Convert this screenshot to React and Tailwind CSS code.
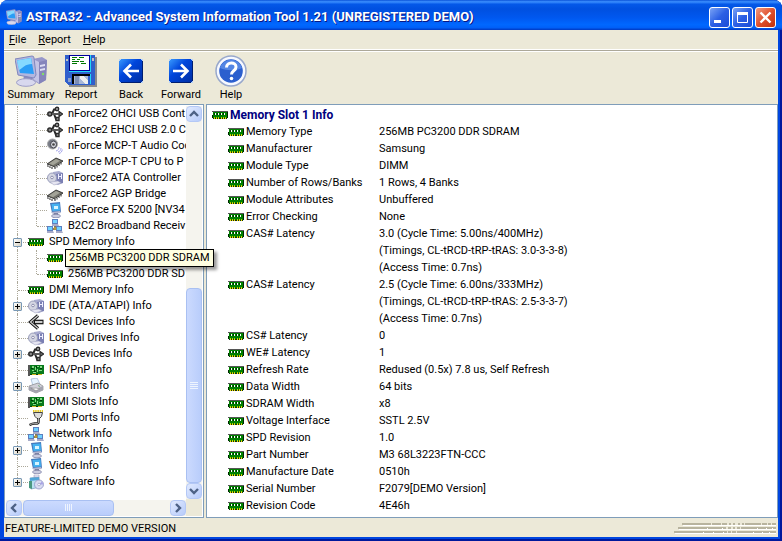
import { useState } from 'react'

const treeItems = [
  { label: 'nForce2 OHCI USB Cont', icon: 'usb', child: true },
  { label: 'nForce2 EHCI USB 2.0 C', icon: 'usb', child: true },
  { label: 'nForce MCP-T Audio Cod', icon: 'audio', child: true },
  { label: 'nForce MCP-T CPU to P', icon: 'chip', child: true },
  { label: 'nForce2 ATA Controller', icon: 'drive', child: true },
  { label: 'nForce2 AGP Bridge', icon: 'chip', child: true },
  { label: 'GeForce FX 5200 [NV34', icon: 'monitor', child: true },
  { label: 'B2C2 Broadband Receiv', icon: 'network', child: true, last: true },
  { label: 'SPD Memory Info', icon: 'ram', expander: '-' },
  { label: '256MB PC3200 DDR SD', icon: 'ram', child: true },
  { label: '256MB PC3200 DDR SD', icon: 'ram', child: true, last: true },
  { label: 'DMI Memory Info', icon: 'ram' },
  { label: 'IDE (ATA/ATAPI) Info', icon: 'drive', expander: '+' },
  { label: 'SCSI Devices Info', icon: 'scsi' },
  { label: 'Logical Drives Info', icon: 'drive' },
  { label: 'USB Devices Info', icon: 'usb', expander: '+' },
  { label: 'ISA/PnP Info', icon: 'card' },
  { label: 'Printers Info', icon: 'printer', expander: '+' },
  { label: 'DMI Slots Info', icon: 'card' },
  { label: 'DMI Ports Info', icon: 'port' },
  { label: 'Network Info', icon: 'network' },
  { label: 'Monitor Info', icon: 'monitor', expander: '+' },
  { label: 'Video Info', icon: 'monitor' },
  { label: 'Software Info', icon: 'software', expander: '+', last: true },
]

const details = [
  ['Memory Type', '256MB PC3200 DDR SDRAM'],
  ['Manufacturer', 'Samsung'],
  ['Module Type', 'DIMM'],
  ['Number of Rows/Banks', '1 Rows, 4 Banks'],
  ['Module Attributes', 'Unbuffered'],
  ['Error Checking', 'None'],
  ['CAS# Latency', '3.0 (Cycle Time: 5.00ns/400MHz)'],
  ['', '(Timings, CL-tRCD-tRP-tRAS: 3.0-3-3-8)'],
  ['', '(Access Time: 0.7ns)'],
  ['CAS# Latency', '2.5 (Cycle Time: 6.00ns/333MHz)'],
  ['', '(Timings, CL-tRCD-tRP-tRAS: 2.5-3-3-7)'],
  ['', '(Access Time: 0.7ns)'],
  ['CS# Latency', '0'],
  ['WE# Latency', '1'],
  ['Refresh Rate', 'Redused (0.5x) 7.8 us, Self Refresh'],
  ['Data Width', '64 bits'],
  ['SDRAM Width', 'x8'],
  ['Voltage Interface', 'SSTL 2.5V'],
  ['SPD Revision', '1.0'],
  ['Part Number', 'M3 68L3223FTN-CCC'],
  ['Manufacture Date', '0510h'],
  ['Serial Number', 'F2079[DEMO Version]'],
  ['Revision Code', '4E46h'],
]

const Screen = ({ x, y }) => (
  <g>
    <rect x={x} y={y} width="6" height="5" fill="#5c7fc0" />
    <rect x={x + 1} y={y + 1} width="4" height="3" fill="#6fd2ff" />
    <path d={`M${x} ${y + 5}h6l1 2h-7z`} fill="#a7abc8" />
  </g>
)

const icons = {
  ram: (
    <g shapeRendering="crispEdges">
      <path d="M1 4h15v7H1z" fill="#008000" />
      <path d="M0 4h16v1H0z" fill="#555" />
      <path d="M15 5h1v6h-1zM0 8h1v3H0z" fill="#002800" />
      <path d="M2 6h1v2H2zM5 6h1v2H5zM8 6h1v2H8zM11 6h1v2h-1z" fill="#003400" />
      <path d="M3 6h1v2H3zM6 6h1v2H6zM9 6h1v2H9zM12 6h1v2h-1z" fill="#fff" />
      <path d="M1 11h14v1H1z" fill="#103010" />
      <path d="M2 10h1v1H2zM4 10h1v1H4zM6 10h1v1H6zM9 10h1v1H9zM11 10h1v1h-1zM13 10h1v1h-1z" fill="#b8d000" />
      <path d="M2 11h1v1H2zM4 11h1v1H4zM6 11h1v1H6zM9 11h1v1H9zM11 11h1v1h-1zM13 11h1v1h-1z" fill="#f8e000" />
    </g>
  ),
  usb: (
    <g fill="none" stroke="#2b2b2b" strokeWidth="2">
      <path d="M2 8h11M5 8l2-4.500h3M7 8l2 5h2" />
      <circle cx="2.800" cy="8" r="2" fill="#888" strokeWidth="1.500" />
      <circle cx="10" cy="3" r="1.700" fill="#aaa" strokeWidth="1.400" />
      <path d="M9 11.500h3v3H9z" fill="#999" strokeWidth="1.400" />
      <path d="M12 5.500L15.500 8 12 10.500z" fill="#777" strokeWidth="1.200" />
      <path d="M5 8h7" stroke="#999" strokeWidth=".8" />
    </g>
  ),
  audio: (
    <g fill="none">
      <circle cx="5.500" cy="6" r="5" fill="#777b85" stroke="#aaa" />
      <ellipse cx="6.500" cy="6.500" rx="3" ry="3.500" fill="#d0d2da" stroke="#45454f" />
      <circle cx="6.500" cy="6.500" r="1.300" fill="#444" />
      <path d="M9 13c2-.5 3-2 3-4M11 14c2-.5 3-2 3-4M12 15.500c2-.5 3-2 3.300-4" stroke="#a5a5e8" />
    </g>
  ),
  chip: (
    <g>
      <path d="M0 10L9 4l7 3-8 6z" fill="#707068" stroke="#222" strokeWidth=".8" />
      <path d="M2 9.500L9 5l4 1.800L6 11.300z" fill="#a3a398" />
      <path d="M1 11v2M3 12v2M5 13v2M8 13v2M10 11.500v2M12 10v2M14 8.500v2" stroke="#222" />
      <path d="M2 11v1M4 12v1M9 12v1M11 11v1M13 9.500v1" stroke="#ddd" />
    </g>
  ),
  drive: (
    <g>
      <path d="M6 2l6-1 4 2v10l-5 2-6-2z" fill="#a9acd0" />
      <path d="M9 4l7-1v10l-6 1z" fill="#7b80b4" />
      <path d="M11 4h1v5h-1zM14 4h1v5h-1zM12 6h2v1h-2z" fill="#eef" />
      <ellipse cx="5" cy="8" rx="4.500" ry="5" fill="#d4d6e2" stroke="#999dbb" />
      <circle cx="5" cy="7.500" r="1.300" fill="#fff" stroke="#7779a0" strokeWidth=".8" />
      <path d="M3 12l8-1 3 2-7 2z" fill="#e6e6f2" stroke="#9b9dbb" strokeWidth=".5" />
    </g>
  ),
  monitor: (
    <g>
      <path d="M3 1l10-1 1 10-9 1z" fill="#4478bc" />
      <path d="M4.500 2l8-.5.5 7-7.500.5z" fill="#45b2f0" />
      <path d="M7 4h4v3H7z" fill="#d6f5ff" />
      <path d="M4 10l9-1 1 2-8 1z" fill="#b2b5d0" />
      <path d="M7 11h4v3H7z" fill="#7d82a5" />
      <ellipse cx="9" cy="14" rx="4.500" ry="1.800" fill="#c9cbe0" stroke="#787ca0" strokeWidth=".7" />
    </g>
  ),
  network: (
    <g>
      <path d="M8 7v5M4 11h9" stroke="#554b29" strokeWidth="1.500" />
      <Screen x={5} y={1} />
      <Screen x={0} y={8} />
      <Screen x={9} y={8} />
      <circle cx="8" cy="10.500" r="1.500" fill="#b79a3c" />
    </g>
  ),
  scsi: (
    <g fill="none" strokeLinejoin="miter">
      <path d="M10 1.500L2.500 8l7.500 6.500" stroke="#111" strokeWidth="3.200" />
      <path d="M6 8h9.500" stroke="#111" strokeWidth="4.600" />
      <path d="M10 1.500L2.500 8l7.500 6.500" stroke="#ccc" strokeWidth="1.300" />
      <path d="M7 8h7.500" stroke="#ccc" strokeWidth="2.200" />
    </g>
  ),
  card: (
    <g shapeRendering="crispEdges">
      <path d="M1 3h15v9H1z" fill="#087a1c" />
      <path d="M0 3h2v11H0z" fill="#555" />
      <path d="M4 4h2v2H4zM7 5h1v3H7zM9 4h2v1H9zM12 4h2v2h-2zM4 8h2v1H4zM9 7h1v3H9zM11 8h3v1h-3zM5 10h3v1H5z" fill="#85db85" />
      <path d="M3 6h2v1H3zM8 4h1v2H8zM12 6h2v1h-2zM6 9h2v1H6z" fill="#003b08" />
      <path d="M4 12h4v1H4zM10 12h4v1h-4z" fill="#d6b820" />
      <path d="M2 12h2v1H2zM8 12h2v1H8z" fill="#044010" />
    </g>
  ),
  printer: (
    <g strokeWidth=".6">
      <path d="M3 1l6-1 3 6-7 2z" fill="#e7f4ff" stroke="#87a5cb" />
      <path d="M1 8l9-3 5 3v4l-7 3-7-3z" fill="#d0d0d8" stroke="#777" />
      <path d="M1 8l7 3 7-3v4l-7 3-7-3z" fill="#a4a4b0" />
      <path d="M3 10.500l5 2 4-1.500-4-1z" fill="#fff" stroke="#888" />
      <path d="M10 7.500l2 1" stroke="#42944c" />
    </g>
  ),
  port: (
    <g fill="none">
      <path d="M5 1h10" stroke="#e5c923" strokeWidth="2" strokeDasharray="1.500 .7" />
      <path d="M5.500 2.500h9l-1 4-2 2H9l-2-2z" fill="#ddd" stroke="#444" />
      <path d="M10.500 8v4c0 2-2 1.500-4 1.500s-3 .5-5 1.500" stroke="#222" strokeWidth="2.500" />
      <path d="M10.500 8v4c0 2-2 1.500-4 1.500s-3 .5-5 1.500" stroke="#ccc" strokeWidth=".8" />
    </g>
  ),
  software: (
    <g>
      <path d="M2 4l9-1 1 10-9 2z" fill="#b8e0f0" stroke="#7298bb" strokeWidth=".7" />
      <path d="M2 4l9-1v3l-9 1z" fill="#4fa5d8" />
      <path d="M6 1h5v2H6z" fill="#eef" stroke="#88a" strokeWidth=".5" />
      <path d="M1 7h3v8l-3-1z" fill="#4a9880" />
      <circle cx="11" cy="10.500" r="4.500" fill="#d9dcf2" stroke="#8e93c4" strokeWidth=".8" />
      <path d="M11 10.500l3-3a4 4 0 0 1 1 3z" fill="#a7a1e5" />
      <circle cx="11" cy="10.500" r="1.300" fill="#fff" stroke="#888db5" strokeWidth=".6" />
    </g>
  ),
}

const Icon = ({ name }) => (
  <svg className="h-4 w-4 shrink-0" viewBox="0 0 16 16" aria-hidden="true">
    {icons[name]}
  </svg>
)

const ComputerIcon = ({ className }) => (
  <svg className={className} viewBox="0 0 32 32" aria-hidden="true">
    <path d="M18 4l9-2 5 3-1 20-7 4-6-4z" fill="#9797ca" />
    <path d="M18 4l6 3v21l-6-4z" fill="#c4c4e5" />
    <path d="M24 7l8-2-1 20-7 4z" fill="#8585bb" />
    <path d="M25 10l5-1v2l-5 1zM25 14l5-1v2l-5 1z" fill="#dedef4" />
    <circle cx="28" cy="19" r="1.200" fill="#83e067" />
    <path d="M9 20l9 3-1 4H8z" fill="#8b8bbd" />
    <ellipse cx="11" cy="27.500" rx="9.500" ry="3.800" fill="#d8d8ee" stroke="#9d9dc6" />
    <path d="M0 4l17-3q2 0 2 2l2 17-2 3L3 20z" fill="#b3b7df" stroke="#7f86bd" />
    <path d="M2 5.500L16 3l3 16-14-1z" fill="#2b9df5" />
    <path d="M2 5.500L16 3l1 6C10 9 8 13 4 15z" fill="#85d9ff" />
  </svg>
)

const FloppyIcon = () => (
  <svg className="h-8 w-8" viewBox="0 0 32 32" shapeRendering="crispEdges" aria-hidden="true">
    <path d="M2 2h30v30H4z" fill="#8b8b8b" />
    <path d="M0 0h30v30H3l-3-3z" fill="#2f5fcc" />
    <path d="M4 0h1v16h20V0h1v17H4z" fill="#20d8f8" />
    <path d="M4 0h1v16H4z" fill="#000080" />
    <path d="M5 0h19v15H5z" fill="#fff" />
    <path d="M4 0h21v1H4zM5 15h19v1H5zM24 0h1v16h-1z" fill="#0000a0" />
    <path d="M7 2h5v1H7zM14 2h5v1h-5zM7 4h3v1H7zM12 4h3v1h-3zM7 6h7v1H7zM15 6h4v1h-4zM7 8h5v1H7zM16 8h5v1h-5z" fill="#007800" />
    <path d="M1 4h2v2H1zM27 3h2v3h-2z" fill="#c0c0c0" />
    <path d="M7 19h18v2H9v8H7z" fill="#000" />
    <path d="M9 21h14v8H9z" fill="#a8b7d8" />
    <path d="M10 21h4v8h-4z" fill="#7d8eb5" />
    <path d="M15 21h4l4 5v3h-3l-5-6z" fill="#eee" />
    <path d="M25 19h1v10h-1z" fill="#20d8f8" />
    <path d="M3 23h3v4H3z" fill="#8a9fc9" />
  </svg>
)

const ArrowIcon = ({ forward }) => (
  <svg className="h-8 w-8" viewBox="0 0 32 32" aria-hidden="true">
    <defs>
      <linearGradient id="arrowFill" x1="0" y1="0" x2="1" y2="1">
        <stop offset="0" stopColor="#3a9bff" />
        <stop offset=".4" stopColor="#0046dc" />
        <stop offset="1" stopColor="#002da0" />
      </linearGradient>
    </defs>
    <path d="M4 4h24v24H4z" fill="url(#arrowFill)" />
    <path d="M5 27h22V5h1v23H4z" fill="#001e70" />
    <path d="M4 4h2v1H5v1H4zM28 4h-2v1h1v1h1zM4 28h2v-1H5v-1H4zM28 28h-2v-1h1v-1h1z" fill="#b8d4f8" />
    <path
      d={forward ? 'M8 16h14M16 9.500l6.500 6.500-6.500 6.500' : 'M24 16H10M16 9.500L9.500 16l6.500 6.500'}
      fill="none"
      stroke="#fff"
      strokeWidth="2.600"
    />
  </svg>
)

const HelpIcon = () => (
  <svg className="h-8 w-8" viewBox="0 0 32 32" aria-hidden="true">
    <circle cx="16" cy="16" r="15" fill="#f7f9ff" stroke="#98a8cc" strokeWidth="1.500" />
    <circle cx="16" cy="16" r="11.800" fill="#2b5fce" />
    <path d="M5 13a11.500 11.500 0 0 1 22 0c-6 3-15 3-22 0z" fill="#5486e4" />
    <path d="M11.500 12.500c0-6 9.500-6 9.500-.5 0 4-4.500 3.500-4.500 7.500" fill="none" stroke="#fff" strokeWidth="3" />
    <circle cx="16.500" cy="23.500" r="1.800" fill="#fff" />
  </svg>
)

const toolbar = [
  { label: 'Summary', icon: <ComputerIcon className="h-8 w-8" /> },
  { label: 'Report', icon: <FloppyIcon /> },
  { label: 'Back', icon: <ArrowIcon /> },
  { label: 'Forward', icon: <ArrowIcon forward /> },
  { label: 'Help', icon: <HelpIcon /> },
]

const chevrons = {
  up: 'M4 10l4-4 4 4',
  down: 'M4 6l4 4 4-4',
  left: 'M10 4L6 8l4 4',
  right: 'M6 4l4 4-4 4',
}

const ScrollButton = ({ direction }) => (
  <button
    aria-label={`Scroll ${direction}`}
    className="flex h-4 w-4 shrink-0 items-center justify-center rounded-sm border border-[#b4c8f6] bg-gradient-to-br from-[#e1eafe] to-[#b7cbfa]"
  >
    <svg className="h-4 w-4 shrink-0" viewBox="0 0 16 16" fill="none" stroke="#4d6185" strokeWidth="2.400" aria-hidden="true">
      <path d={chevrons[direction]} />
    </svg>
  </button>
)

const TitleButton = ({ label, close, children }) => (
  <button
    aria-label={label}
    className={
      close
        ? 'h-[21px] w-[21px] rounded-[3px] border border-white bg-gradient-to-br from-[#f09a80] via-[#e0502c] to-[#c03008]'
        : 'h-[21px] w-[21px] rounded-[3px] border border-white bg-gradient-to-br from-[#7ba2f5] via-[#2c5fe4] to-[#1b4cd8]'
    }
  >
    <svg className="h-[19px] w-[19px]" viewBox="0 0 19 19" fill="none" stroke="#fff" aria-hidden="true">
      {children}
    </svg>
  </button>
)

const TreeRow = ({ item }) => {
  const [expander, setExpander] = useState(item.expander)
  const rootEnds = item.last && !item.child

  return (
    <li className="flex h-4 items-center whitespace-nowrap">
      <span className="relative flex h-4 w-[22px] shrink-0 pl-[11px]">
        <span className={`w-full border-l border-dotted border-[#aca899] ${rootEnds ? 'h-2' : 'h-4'}`}>
          {!item.child && <span className="block h-[9px] border-b border-dotted border-[#aca899]" />}
        </span>
        {item.expander && (
          <button
            aria-label={`Toggle ${item.label}`}
            onClick={() => setExpander(expander === '+' ? '-' : '+')}
            className="absolute top-1 left-[7px] h-[9px] w-[9px] rounded-[1px] border border-[#7898b5] bg-gradient-to-br from-white to-[#d6d0c0]"
          >
            <svg className="h-[7px] w-[7px]" viewBox="0 0 7 7" shapeRendering="crispEdges" aria-hidden="true">
              <path d={expander === '+' ? 'M1 3h5v1H1zM3 1h1v5H3z' : 'M1 3h5v1H1z'} />
            </svg>
          </button>
        )}
      </span>
      {item.child && (
        <span className="flex h-4 w-[19px] shrink-0 pl-2">
          <span className={`w-full border-l border-dotted border-[#aca899] ${item.last ? 'h-2' : 'h-4'}`}>
            <span className="block h-[9px] border-b border-dotted border-[#aca899]" />
          </span>
        </span>
      )}
      <Icon name={item.icon} />
      <span className="ml-[5px]">{item.label}</span>
    </li>
  )
}

const DeviceTree = () => (
  <nav className="relative flex w-[200px] shrink-0 flex-col border border-[#7f9db9] bg-white p-px">
    <div className="flex min-h-0 flex-1">
      <ul className="min-w-0 flex-1 overflow-hidden">
        {treeItems.map((item, index) => (
          <TreeRow key={index} item={item} />
        ))}
      </ul>
      <div className="flex w-4 shrink-0 flex-col bg-[#f5f4ee]">
        <ScrollButton direction="up" />
        <div className="flex-1" />
        <div className="flex h-[195px] flex-col items-center justify-center gap-px rounded-sm border border-[#a9c0f2] bg-gradient-to-r from-[#cbdafe] to-[#b9cdfb]">
          {[0, 1, 2, 3].map((n) => (
            <span key={n} className="h-px w-2 border-t border-[#eef4fe]" />
          ))}
        </div>
        <ScrollButton direction="down" />
      </div>
    </div>
    <div className="flex h-[17px] shrink-0 items-center">
      <div className="flex flex-1 bg-[#f5f4ee]">
        <ScrollButton direction="left" />
        <div className="ml-px flex h-4 w-[91px] items-center justify-center gap-px rounded-sm border border-[#a9c0f2] bg-gradient-to-b from-[#cbdafe] to-[#b9cdfb]">
          {[0, 1, 2, 3].map((n) => (
            <span key={n} className="h-[7px] w-px bg-[#eef4fe]" />
          ))}
        </div>
        <div className="flex-1" />
        <ScrollButton direction="right" />
      </div>
      <div className="h-full w-4 bg-[#ece9d8]" />
    </div>
    <div
      role="tooltip"
      className="absolute top-[144px] left-[60px] z-10 border border-black bg-[#ffffe1] px-[3px] leading-4 whitespace-nowrap shadow-[3px_3px_3px_rgba(0,0,0,0.4)]"
    >
      256MB PC3200 DDR SDRAM
    </div>
  </nav>
)

const DetailsPane = () => (
  <main className="min-w-0 flex-1 overflow-hidden border border-[#7f9db9] bg-white pt-px pl-[5px]">
    <h2 className="flex h-[17px] items-center gap-[2px] text-[12px] font-bold text-[#000080]">
      <Icon name="ram" />
      Memory Slot 1 Info
    </h2>
    <table className="w-full table-fixed border-collapse text-left">
      <tbody>
        {details.map(([name, value], index) => (
          <tr key={index} className="h-[17px]">
            <th scope="row" className="w-[167px] p-0 pl-4 font-normal">
              {name && (
                <span className="flex h-[17px] items-center gap-[2px]">
                  <Icon name="ram" />
                  {name}
                </span>
              )}
            </th>
            <td className="p-0 whitespace-nowrap">{value}</td>
          </tr>
        ))}
      </tbody>
    </table>
  </main>
)

const StatusGrip = () => (
  <svg className="h-3 w-[104px]" viewBox="0 0 104 12" shapeRendering="crispEdges" aria-hidden="true">
    <path d="M9 2h93v1H9zM5 6h97v1H5zM1 10h101v1H1z" fill="#fff" />
    <path d="M8 0h29v2H8zM38 0h9v2h-9zM48 0h5v2h-5zM55 0h2v2h-2zM59 0h2v2h-2zM64 0h2v2h-2zM68 0h2v2h-2zM71 0h16v2H71zM88 0h5v2h-5zM94 0h3v2h-3zM98 0h4v2h-4z" fill="#b8b49f" />
    <path d="M4 4h48v2H4zM54 4h3v2h-3zM59 4h2v2h-2zM63 4h3v2h-3zM67 4h35v2H67z" fill="#b8b49f" />
    <path d="M0 8h53v2H0zM54 8h3v2h-3zM58 8h4v2h-4zM63 8h39v2H63z" fill="#b8b49f" />
    <path d="M33 5h1v1h-1zM48 5h1v1h-1zM83 5h1v1h-1zM92 5h1v1h-1zM98 5h1v1h-1zM29 9h1v1h-1zM39 9h1v1h-1zM49 9h1v1h-1zM79 9h1v1h-1zM88 9h1v1h-1zM95 9h1v1h-1z" fill="#fff" />
  </svg>
)

const App = () => {
  return (
    <div className="flex h-screen min-h-[541px] flex-col overflow-hidden rounded-t-lg bg-[#0046e0] font-['Roboto',sans-serif] text-[11px] leading-4 text-black shadow-[inset_-1px_-1px_0_1px_#00189c]">
      <header className="flex h-[30px] shrink-0 items-center gap-[2px] bg-[linear-gradient(#0a52d8_0,#3c90ff_6%,#0458e8_14%,#0050e0_30%,#0058f0_60%,#0068ff_82%,#0060f8_92%,#0038c0_100%)] pt-1 pr-[6px] pl-[6px]">
        <ComputerIcon className="mr-[2px] h-4 w-4" />
        <h1 className="flex-1 text-[13px] font-bold whitespace-nowrap text-white [text-shadow:1px_1px_0_#0a1883]">
          ASTRA32 - Advanced System Information Tool 1.21 (UNREGISTERED DEMO)
        </h1>
        <TitleButton label="Minimize">
          <path d="M4 13.500h7" strokeWidth="3" />
        </TitleButton>
        <TitleButton label="Maximize">
          <path d="M4.500 5v9.500h10V5" />
          <path d="M4 5.500h11" strokeWidth="3" />
        </TitleButton>
        <TitleButton label="Close" close>
          <path d="M4.500 4.500l10 10M14.500 4.500l-10 10" strokeWidth="2.400" />
        </TitleButton>
      </header>

      <div className="mx-1 mb-1 flex min-h-0 flex-1 flex-col bg-[#ece9d8]">
        <div role="menubar" className="flex h-[19px] shrink-0 items-center gap-3 pl-[5px]">
          {['File', 'Report', 'Help'].map((menu) => (
            <button key={menu} role="menuitem">
              <span className="underline">{menu[0]}</span>
              {menu.slice(1)}
            </button>
          ))}
        </div>
        <div className="h-[3px] shrink-0 border-y border-white bg-[#aca899]" />

        <div role="toolbar" className="flex h-[52px] shrink-0 items-start pt-[3px] pl-[2px]">
          {toolbar.map(({ label, icon }) => (
            <button key={label} className="flex w-[50px] flex-col items-center">
              {icon}
              {label}
            </button>
          ))}
        </div>

        <div className="flex min-h-0 flex-1 gap-[2px]">
          <DeviceTree />
          <DetailsPane />
        </div>

        <footer className="flex h-[19px] shrink-0 items-center justify-between pt-[2px] pl-px">
          <span>FEATURE-LIMITED DEMO VERSION</span>
          <StatusGrip />
        </footer>
      </div>
    </div>
  )
}

export default App
